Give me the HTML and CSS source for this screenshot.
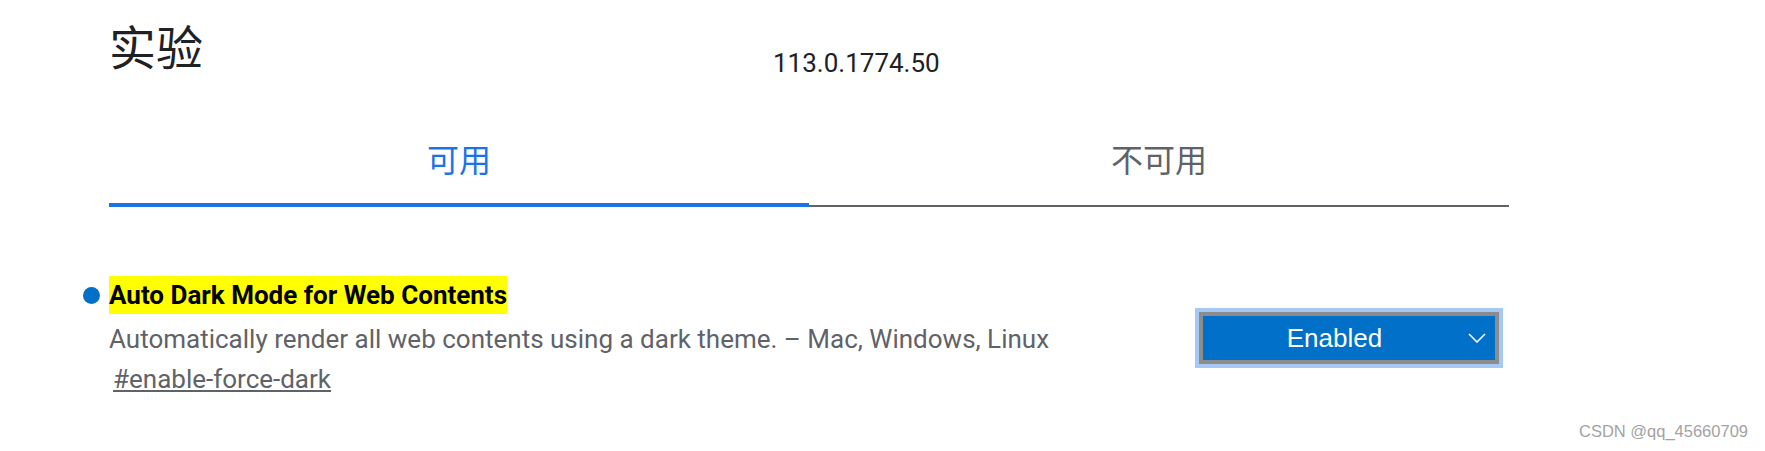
FILE: index.html
```html
<!DOCTYPE html>
<html lang="zh-CN">
<head>
<meta charset="utf-8">
<title>实验</title>
<link rel="stylesheet" href="styles.css">
</head>
<body>
<div class="page">
  <header class="header">
    <h1 class="title">实验</h1>
    <span class="version">113.0.1774.50</span>
  </header>
  <nav class="tabs">
    <div class="tab active">可用</div>
    <div class="tab">不可用</div>
  </nav>
  <section class="experiment">
    <div class="exp-info">
      <h2 class="exp-name"><span class="dot"></span><span class="mark">Auto Dark Mode for Web Contents</span></h2>
      <p class="exp-desc">Automatically render all web contents using a dark theme. – Mac, Windows, Linux</p>
      <a class="exp-link" href="#enable-force-dark">#enable-force-dark</a>
    </div>
    <div class="select">
      <span class="select-value">Enabled</span>
      <svg class="chevron" width="18" height="10" viewBox="0 0 18 10"><path d="M1 1 L9 9 L17 1" fill="none" stroke="#fff" stroke-width="1.6"/></svg>
    </div>
  </section>
</div>
<div class="watermark">CSDN @qq_45660709</div>
</body>
</html>
```
FILE: styles.css
```css
html, body {
  margin: 0;
  padding: 0;
  background: #fff;
}
body {
  font-family: Roboto, "Noto Sans CJK SC", sans-serif;
  color: #202124;
}
.page {
  padding-left: 109px;
  width: 1400px;
}
.header {
  display: flex;
  align-items: flex-start;
  height: 100px;
}
.title {
  margin: 0;
  padding-top: 3px;
  width: 664px;
  font-family: "Noto Sans CJK SC", sans-serif;
  font-weight: 400;
  font-size: 47px;
  line-height: 84px;
  color: #202124;
}
.version {
  margin-top: 48px;
  font-size: 26px;
  line-height: 30px;
  color: #202124;
}
.tabs {
  display: flex;
  margin-top: 26px;
}
.tab {
  flex: 1;
  text-align: center;
  font-family: "Noto Sans CJK SC", sans-serif;
  font-size: 32px;
  line-height: 40px;
  color: #5f6368;
  padding: 12px 0 27px;
  border-bottom: 2px solid #5f6368;
}
.tab.active {
  color: #1a73e8;
  padding-bottom: 25px;
  border-bottom: 4px solid #1a73e8;
}
.experiment {
  display: flex;
  justify-content: space-between;
  align-items: flex-start;
  margin-top: 69px;
  padding-right: 6px;
}
.exp-name {
  position: relative;
  margin: 0;
  font-size: 26px;
  font-weight: 700;
  color: #000;
}
.dot {
  position: absolute;
  left: -26px;
  top: 11px;
  width: 17px;
  height: 17px;
  border-radius: 50%;
  background: #0070c9;
}
.mark {
  display: inline-block;
  background: #ffff00;
  line-height: 38px;
}
.exp-desc {
  margin: 5px 0 0;
  font-size: 26px;
  line-height: 40px;
  color: #5f6368;
}
.exp-link {
  display: inline-block;
  margin-left: 4px;
  font-size: 26px;
  line-height: 40px;
  color: #5f6368;
  text-decoration: underline;
}
.select {
  display: flex;
  align-items: center;
  width: 292px;
  height: 44px;
  margin-top: 36px;
  margin-right: 4px;
  background: #0070c9;
  border: 4px solid #8c8c8c;
  outline: 4px solid #a6c8f5;
  color: #fff;
  font-family: "Liberation Sans", Arial, sans-serif;
  font-size: 26px;
}
.select-value {
  flex: 1;
  text-align: center;
  padding-left: 4px;
}
.chevron {
  margin: 0 9px 0 6px;
}
.watermark {
  position: absolute;
  right: 17px;
  bottom: 10px;
  font-family: "Liberation Sans", Arial, sans-serif;
  font-size: 16.5px;
  color: #a3a3a3;
}
```
